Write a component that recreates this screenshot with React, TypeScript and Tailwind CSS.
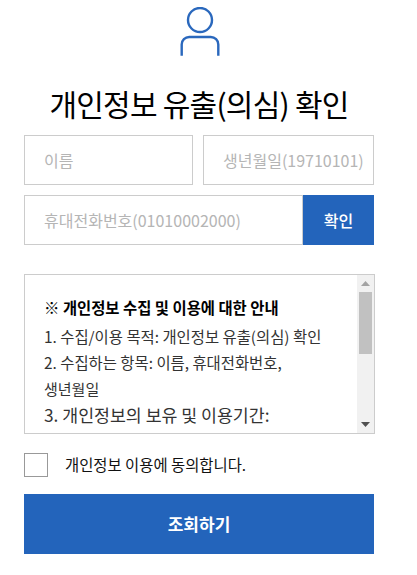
export default function App() {
  return (
    <div className="w-[417px] h-[575px] bg-white overflow-hidden font-['Noto_Sans_CJK_KR',sans-serif] pl-6">
      <div className="w-[350px] flex flex-col">
        <div className="flex justify-center pt-[7px] pl-[1px]">
          <svg width="40" height="49" viewBox="0 0 40 49" fill="none" stroke="#2a68bd" strokeWidth="2.4">
            <circle cx="20" cy="13" r="12" />
            <path d="M1.7 48.7 V37.5 a7.5 7.5 0 0 1 7.5 -7.5 H30.8 a7.5 7.5 0 0 1 7.5 7.5 V48.7" />
          </svg>
        </div>
        <h1 className="text-[30px] leading-[44px] mt-[25px] text-center text-black font-normal tracking-[-0.75px] whitespace-nowrap">개인정보 유출(의심) 확인</h1>
        <div className="flex gap-[10px] mt-[10px]">
          <div className="w-[169px] h-[50px] border border-[#ccc] flex items-center pl-[19px] text-[16px] leading-[22px] pb-[1px] text-[#b5b5b5]">이름</div>
          <div className="w-[171px] h-[50px] border border-[#ccc] flex items-center pl-[19px] text-[16px] leading-[22px] pb-[1px] text-[#b5b5b5] whitespace-nowrap overflow-hidden">생년월일(19710101)</div>
        </div>
        <div className="flex mt-[10px]">
          <div className="w-[279px] h-[50px] border border-[#ccc] flex items-center pl-[19px] text-[16px] leading-[22px] pb-[1px] text-[#b5b5b5]">휴대전화번호(01010002000)</div>
          <div className="w-[71px] h-[50px] bg-[#2364bb] text-white flex items-center justify-center text-[16px] font-medium">확인</div>
        </div>
        <div className="mt-[29px] w-[351px] h-[160px] border border-[#ccc] flex overflow-hidden">
          <div className="flex-1 pl-[19px] pt-[19px] text-[15.4px] leading-[26px] text-[#333] whitespace-nowrap">
            <p className="font-bold text-black text-[15.4px] leading-[27px]">※ 개인정보 수집 및 이용에 대한 안내</p>
            <p className="mt-[2px]">1. 수집/이용 목적: 개인정보 유출(의심) 확인</p>
            <p>2. 수집하는 항목: 이름, 휴대전화번호,<br /><span className="text-[15px]">생년월일</span></p>
            <p className="text-[17.3px]">3. 개인정보의 보유 및 이용기간:</p>
          </div>
          <div className="w-[17px] bg-[#f1f1f1] flex flex-col items-center shrink-0">
            <div className="h-[17px] flex items-center justify-center">
              <svg width="9" height="5" viewBox="0 0 9 5"><path d="M4.5 0 L9 5 H0 Z" fill="#a3a3a3" /></svg>
            </div>
            <div className="w-[13px] h-[62px] bg-[#c1c1c1]"></div>
            <div className="flex-1"></div>
            <div className="h-[17px] flex items-center justify-center">
              <svg width="9" height="5" viewBox="0 0 9 5"><path d="M0 0 H9 L4.5 5 Z" fill="#505050" /></svg>
            </div>
          </div>
        </div>
        <div className="flex items-center mt-[19px]">
          <div className="w-[24px] h-[24px] border border-[#999]"></div>
          <span className="ml-[17px] text-[15.4px] text-[#111]">개인정보 이용에 동의합니다.</span>
        </div>
        <div className="mt-[17px] w-[350px] h-[60px] bg-[#2364bb] text-white flex items-center justify-center text-[17px] font-bold">조회하기</div>
      </div>
    </div>
  );
}
